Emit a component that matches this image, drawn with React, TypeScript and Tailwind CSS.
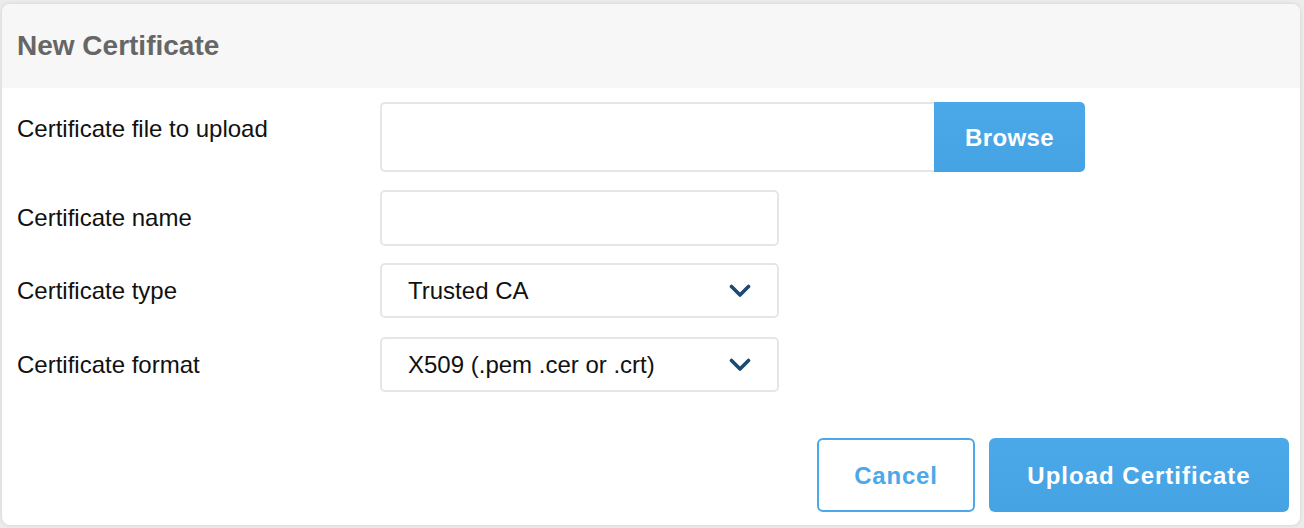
const font = { fontFamily: '"Liberation Sans", Arial, sans-serif' };

function Chevron() {
  return (
    <svg width="22" height="14" viewBox="0 0 22 14" className="shrink-0">
      <path d="M2.5 2.5 L11 11 L19.5 2.5" fill="none" stroke="#1d4a73" strokeWidth="3.6" strokeLinecap="round" strokeLinejoin="round" />
    </svg>
  );
}

function Row({ label, children, className }: { label: string; children: React.ReactNode; className?: string }) {
  return (
    <div className={`flex ${className ?? ""}`}>
      <div className="w-[363px] shrink-0 text-[24px] leading-[36px] text-[#111]">{label}</div>
      {children}
    </div>
  );
}

function Select({ value }: { value: string }) {
  return (
    <div className="flex h-[55px] w-[399px] items-center justify-between rounded-[5px] border-2 border-[#e6e6e6] pl-[26px] pr-[26px] text-[24px] text-[#111]">
      <span>{value}</span>
      <Chevron />
    </div>
  );
}

export default function App() {
  return (
    <div className="h-[528px] w-[1304px] overflow-hidden bg-[#ececec] pl-[2px] pt-[4px]" style={font}>
      <div className="flex h-[521px] w-[1298px] flex-col overflow-hidden rounded-[8px] bg-white shadow-[0_0_4px_rgba(0,0,0,0.12)]">
        <div className="flex h-[84px] shrink-0 items-center bg-[#f7f7f7] px-[15px]">
          <h1 className="text-[28px] font-bold text-[#666]">New Certificate</h1>
        </div>

        <div className="flex flex-col px-[15px] pt-[14px]">
          <Row label="Certificate file to upload" className="items-start [&>div:first-child]:pt-[9px]">
            <div className="flex h-[70px]">
              <div className="w-[554px] rounded-l-[5px] border-2 border-r-0 border-[#e6e6e6]" />
              <button className="w-[151px] rounded-r-[5px] bg-gradient-to-b from-[#4ca9e9] to-[#45a3e3] pt-[1px] text-[24px] font-bold tracking-[0.4px] text-white">
                Browse
              </button>
            </div>
          </Row>

          <Row label="Certificate name" className="mt-[18px] items-center">
            <div className="h-[56px] w-[399px] rounded-[5px] border-2 border-[#e6e6e6]" />
          </Row>

          <Row label="Certificate type" className="mt-[17px] items-center">
            <Select value="Trusted CA" />
          </Row>

          <Row label="Certificate format" className="mt-[19px] items-center">
            <Select value="X509 (.pem .cer or .crt)" />
          </Row>
        </div>

        <div className="mt-[46px] flex justify-end gap-[14px] pr-[11px]">
          <button className="h-[74px] w-[158px] rounded-[6px] border-2 border-[#4ca8e8] bg-white pt-[2px] text-[24px] font-bold tracking-[0.8px] text-[#4ca8e8]">
            Cancel
          </button>
          <button className="h-[74px] w-[300px] rounded-[6px] bg-gradient-to-b from-[#4ca9e9] to-[#45a3e3] pt-[2px] text-[24px] font-bold tracking-[1px] text-white">
            Upload Certificate
          </button>
        </div>
      </div>
    </div>
  );
}
